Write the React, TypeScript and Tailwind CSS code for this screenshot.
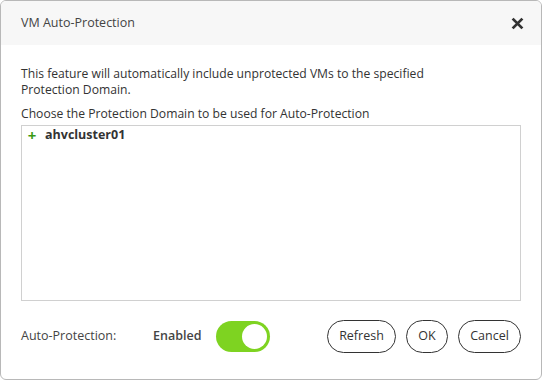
export default function App() {
  return (
    <div className="w-[542px] h-[380px] bg-white font-['Open_Sans',sans-serif] text-[12px] text-[#333]">
      <div className="h-full flex flex-col border border-[#b8b8b8] rounded-md overflow-hidden">
        <div className="h-[44px] shrink-0 bg-[#f7f7f7] flex items-center justify-between pl-5 pr-4">
          <span className="text-[12.5px] text-[#444]">VM Auto-Protection</span>
          <svg width="13" height="13" viewBox="0 0 12 12" className="mr-[1px]">
            <path d="M1.5 1.5 L10.5 10.5 M10.5 1.5 L1.5 10.5" stroke="#333" strokeWidth="2.6" strokeLinecap="butt" />
          </svg>
        </div>
        <div className="flex-1 flex flex-col px-5 pt-[21px]">
          <p className="leading-[16px] pr-24 text-[12.15px]">
            This feature will automatically include unprotected VMs to the specified Protection Domain.
          </p>
          <p className="mt-[8px] leading-[16px] text-[12.15px]">Choose the Protection Domain to be used for Auto-Protection</p>
          <div className="mt-[3px] h-[176px] border border-[#d0d0d0] pl-[5px] pt-[1px]">
            <div className="flex items-center gap-[8px] leading-[16px]">
              <span className="text-[#3a9a14] font-bold text-[15px] w-[10px] text-center">+</span>
              <span className="font-bold text-[12.5px] text-[#333]">ahvcluster01</span>
            </div>
          </div>
          <div className="mt-[19px] flex items-center text-[12.5px]">
            <span className="w-[132px] text-[#444]">Auto-Protection:</span>
            <span className="font-semibold text-[#444]">Enabled</span>
            <div className="ml-[15px] w-[54px] h-[31px] rounded-full bg-[#7ed321] flex items-center justify-end pr-[3px]">
              <div className="w-[25px] h-[25px] rounded-full bg-white" />
            </div>
            <div className="ml-auto flex gap-[10px]">
              <button className="h-[33px] w-[69px] border border-[#333] rounded-full bg-white text-[#333]">Refresh</button>
              <button className="h-[33px] w-[42px] border border-[#333] rounded-full bg-white text-[#333]">OK</button>
              <button className="h-[33px] w-[63px] border border-[#333] rounded-full bg-white text-[#333]">Cancel</button>
            </div>
          </div>
        </div>
      </div>
    </div>
  );
}
